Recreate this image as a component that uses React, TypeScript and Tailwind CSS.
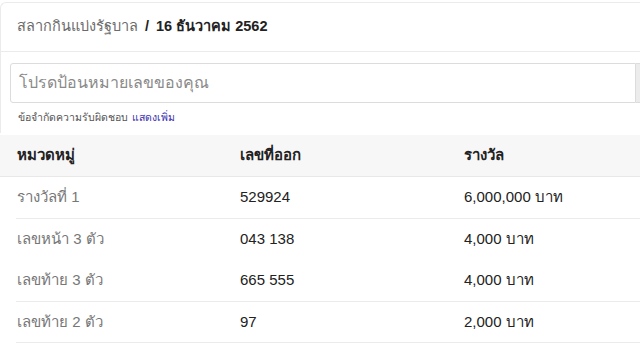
import React from "react";

const rows = [
  { cat: "รางวัลที่ 1", num: "529924", prize: "6,000,000 บาท", border: true },
  { cat: "เลขหน้า 3 ตัว", num: "043 138", prize: "4,000 บาท", border: false },
  { cat: "เลขท้าย 3 ตัว", num: "665 555", prize: "4,000 บาท", border: true },
  { cat: "เลขท้าย 2 ตัว", num: "97", prize: "2,000 บาท", border: true },
];

export default function App() {
  return (
    <div
      className="w-[640px] h-[345px] overflow-hidden bg-white"
      style={{ fontFamily: '"Liberation Sans", Arial, "Noto Sans", sans-serif' }}
    >
      <div className="mt-[2px] border-t border-l border-[#ebebeb] rounded-tl-[6px]">
        <div className="h-[49px] flex items-center pl-[16px] border-b border-[#ebebeb] text-[14.5px]">
          <span className="text-[#6b6b6b]">สลากกินแบ่งรัฐบาล</span>
          <span className="text-[#222] mx-[7px] font-semibold">/</span>
          <span className="text-[#222] font-semibold">16 ธันวาคม 2562</span>
        </div>
        <div className="pt-[11px] pl-[9px]">
          <div className="flex h-[40px]">
            <div className="flex-1 border border-[#dcdcdc] rounded-l-[3px] flex items-center pl-[8px] text-[16px] text-[#8a8a8a]">
              โปรดป้อนหมายเลขของคุณ
            </div>
            <div className="w-[4px] bg-[#ececec] border-y border-[#dcdcdc]" />
          </div>
          <div className="h-[30px] flex items-center pl-[8px] text-[10.5px] text-[#555]">
            <span>ข้อจำกัดความรับผิดชอบ</span>
            <span className="ml-[4px] text-[#3b2fb0]">แสดงเพิ่ม</span>
          </div>
        </div>
      </div>
      <div className="mt-[2px]">
        <div className="h-[42px] flex items-center bg-[#f7f7f7] border-b border-[#e8e8e8] text-[15px] font-bold text-[#222]">
          <div className="w-[240px] pl-[17px]">หมวดหมู่</div>
          <div className="w-[224px]">เลขที่ออก</div>
          <div className="flex-1">รางวัล</div>
        </div>
        {rows.map((r, i) => (
          <div key={i} className="ml-[16px]">
            <div
              className={
                r.border
                  ? "h-[41.5px] flex items-center border-b border-[#ebebeb] text-[15px]"
                  : "h-[41.5px] flex items-center border-b border-transparent text-[15px]"
              }
            >
              <div className="w-[224px] pl-[1px] text-[#777]">{r.cat}</div>
              <div className="w-[224px] text-[#222]">{r.num}</div>
              <div className="flex-1 text-[#222]">{r.prize}</div>
            </div>
          </div>
        ))}
      </div>
    </div>
  );
}
